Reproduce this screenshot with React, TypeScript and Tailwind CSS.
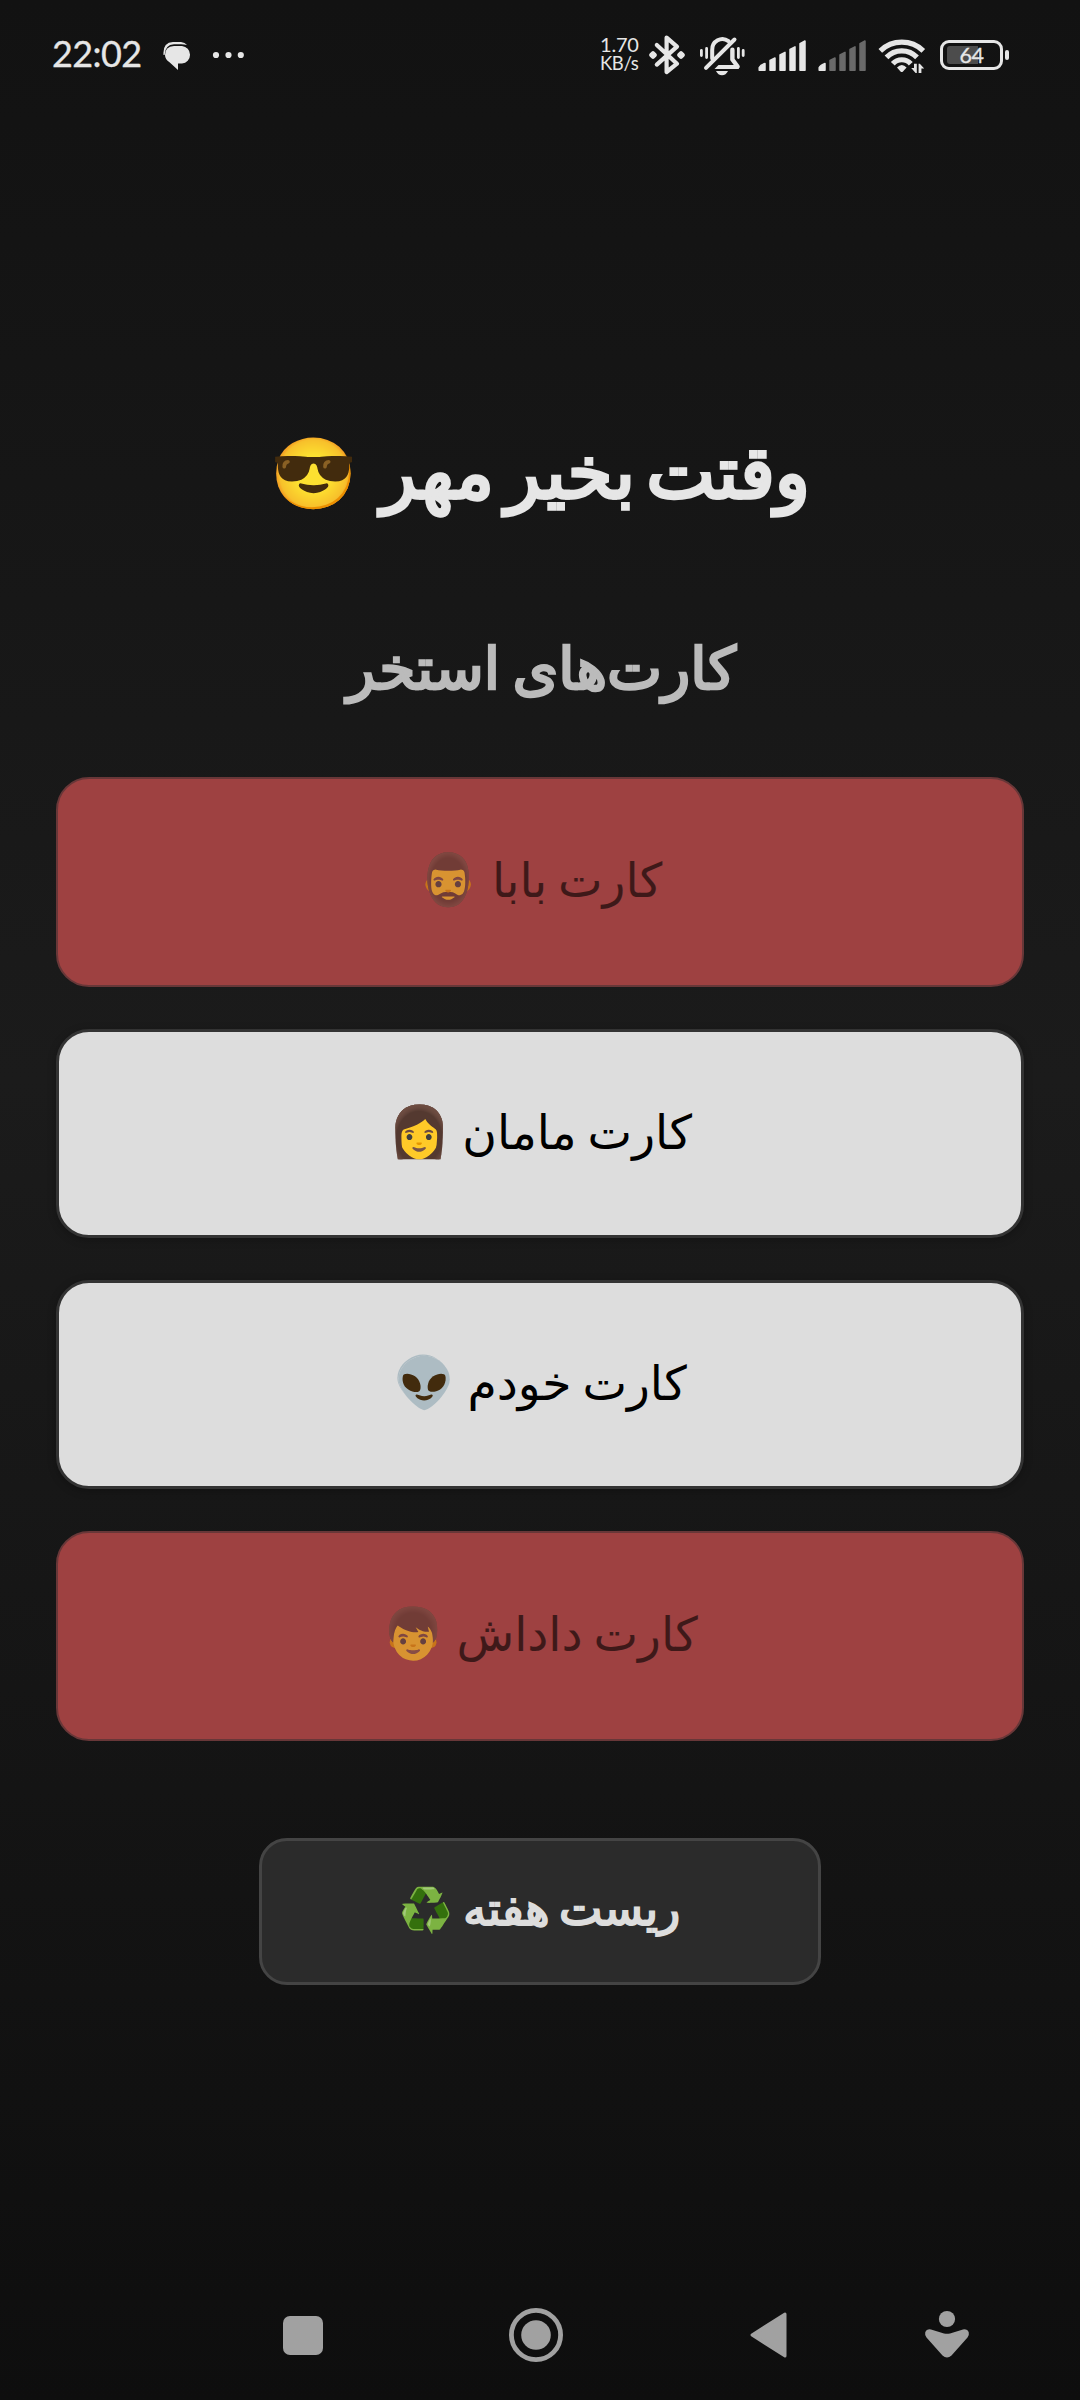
import React from "react";

type CardProps = { label: string; emoji: string; used?: boolean };

const cards: CardProps[] = [
  { label: "کارت بابا", emoji: "🧔‍♂️", used: true },
  { label: "کارت مامان", emoji: "👩" },
  { label: "کارت خودم", emoji: "👽" },
  { label: "کارت داداش", emoji: "👦", used: true },
];

function Card({ label, emoji, used }: CardProps) {
  return (
    <button
      className={
        used
          ? "flex h-[210px] w-full items-center justify-center rounded-[33px] border-[2px] border-[#683738] bg-[#9e4141] pb-[3px]"
          : "flex h-[209px] w-full items-center justify-center rounded-[33px] border-[3px] border-[#333333] bg-[#dddddd] pb-[2px] shadow-[0_2px_8px_rgba(0,0,0,0.25)]"
      }
    >
      <span
        className={
          used
            ? "flex items-baseline gap-[12px] leading-[60px] text-black opacity-60"
            : "flex items-baseline gap-[12px] leading-[60px] text-black"
        }
      >
        <span className="whitespace-nowrap text-[47.3px] [word-spacing:-4px]">{label}</span>
        <span className="font-['Noto_Color_Emoji'] text-[50px]">{emoji}</span>
      </span>
    </button>
  );
}

function Signal({ weak }: { weak?: boolean }) {
  const rest = weak ? "#6a6a6a" : "#e6e6e6";
  return (
    <svg className="h-[46px] w-[50px] shrink-0" viewBox="0 30 50 46" strokeLinejoin="round" strokeWidth="1.5">
      <path d="M1.2 67.5 Q2.5 65 7 63.4 V70.2 H1.2Z" fill="#e6e6e6" stroke="#e6e6e6" />
      <g fill={rest} stroke={rest}>
        <path d="M12 60.5 L17 58 V70.2 H12Z" />
        <path d="M22 55 L27 52.3 V70.2 H22Z" />
        <path d="M32 49.5 L37 46.8 V70.2 H32Z" />
        <path d="M42 43.7 L47 41 V70.2 H42Z" />
      </g>
    </svg>
  );
}

function StatusBar() {
  return (
    <header
      dir="ltr"
      className="flex h-[106px] w-full shrink-0 items-center pl-[52px] font-['Lato',sans-serif] text-[#e6e6e6]"
    >
      <span className="w-[111px] text-[36px] leading-[36px] tracking-[-0.6px] [-webkit-text-stroke:0.3px]">22:02</span>
      <svg className="h-[46px] w-[29px] shrink-0" viewBox="163 30 29 46" fill="#e6e6e6">
        <path d="M163.5 55 Q162.5 42.5 173 42 H181 Q185 42.3 187 45 Q184 44.3 181 44.3 H174 Q165 44.8 164.6 55Z" />
        <path d="M174 46 H182 A9 8.8 0 0 1 182 63.5 H178 V70 L169.5 62.2 Q165 59.5 165 55 Q165 46.5 174 46Z" />
      </svg>
      <svg className="ml-[20px] h-[46px] w-[34px] shrink-0" viewBox="212 30 34 46" fill="#e6e6e6">
        <circle cx="216" cy="55" r="3.1" />
        <circle cx="228.5" cy="55" r="3.1" />
        <circle cx="240.8" cy="55" r="3.1" />
      </svg>
      <div className="ml-[354px] mt-[2px] flex w-[48px] flex-col whitespace-nowrap leading-[19px]">
        <span className="text-[20px] tracking-[-0.2px]">1.70</span>
        <span className="text-[18.5px] tracking-[-0.4px]">KB/s</span>
      </div>
      <svg className="h-[46px] w-[38px] shrink-0" viewBox="648 30 38 46" fill="none" stroke="#e6e6e6" strokeWidth="4.2" strokeLinejoin="round" strokeLinecap="round">
        <path d="M656.8 45 L677 63.7 L666.6 72 V37.6 L677 46.6 L656.8 64.6" />
        <path d="M653 53.2 L654.8 55 L653 56.8 L651.2 55Z M681 53.2 L682.8 55 L681 56.8 L679.2 55Z" />
      </svg>
      <svg className="ml-[12px] h-[46px] w-[48px] shrink-0" viewBox="698 30 48 46" fill="none" stroke="#e6e6e6" strokeWidth="4" strokeLinecap="round">
        <path d="M734.5 39.5 L706 67.8" />
        <path d="M712.2 58.5 V50 A10.2 10.4 0 0 1 728.5 41.2" />
        <path d="M732.4 49.8 V59.5 L737.6 66.5" strokeWidth="4.4" strokeLinejoin="round" />
        <path d="M714.5 68.9 L718.5 65 H738.5 Q740 67 738.5 68.9Z" fill="#e6e6e6" stroke="none" />
        <path d="M716 71 H728 Q726 75.2 722 75.2 T716 71Z" fill="#e6e6e6" stroke="none" />
        <path d="M701.4 50.5 V55.5 M706.6 48.5 V57.5 M738.4 48.5 V57.5 M743.2 50.5 V55.5" strokeWidth="2.8" />
      </svg>
      <div className="ml-[12px] flex gap-[10px]">
        <Signal />
        <Signal weak />
      </div>
      <svg className="ml-[10px] h-[46px] w-[50px] shrink-0" viewBox="878 30 50 46" fill="none" stroke="#e6e6e6" strokeWidth="5.2">
        <path d="M880.3 50.8 A31 31 0 0 1 923.3 50.8" />
        <path d="M886.5 57.4 A21 21 0 0 1 917 57.4" />
        <path d="M892.8 63.8 A12 12 0 0 1 910.8 63.8" />
        <path d="M897 67.5 Q901.8 62.5 906.6 67.5 L903 71.5 Q901.8 72.5 900.5 71.5Z" fill="#e6e6e6" stroke="none" />
        <path d="M911.2 68 H914 V63.8 H916.8 V73 H915.6Z M918.6 63.8 H919.8 L924.2 68.6 H921.4 V73 H918.6Z" fill="#e6e6e6" stroke="none" />
      </svg>
      <div className="relative ml-[12px] mt-[4px] flex h-[30px] w-[63px] shrink-0 items-center justify-center rounded-[9px] border-[3px] border-[#e6e6e6]">
        <span className="absolute left-[4px] top-[3px] h-[18px] w-[31px] rounded-l-[3px] bg-[#4c4c4c]" />
        <span className="relative -mt-[1px] text-[21.5px] leading-[24px] tracking-[-0.4px] [-webkit-text-stroke:0.3px]">64</span>
      </div>
      <span className="ml-[2px] mt-[4px] h-[10px] w-[4px] shrink-0 rounded-[2px] bg-[#e6e6e6]" />
    </header>
  );
}

function NavBar() {
  return (
    <nav dir="ltr" className="mt-auto flex h-[130px] w-full shrink-0 items-center pl-[283px] text-[#a1a1a1]">
      <span className="h-[39px] w-[40px] rounded-[7px] bg-current" />
      <svg className="ml-[186px] h-[56px] w-[54px]" viewBox="0 0 54 56" fill="currentColor">
        <circle cx="27" cy="28" r="24.6" fill="none" stroke="currentColor" strokeWidth="4.8" />
        <circle cx="27" cy="28" r="14.8" />
      </svg>
      <svg className="ml-[186px] h-[56px] w-[40px]" viewBox="0 0 40 56" fill="currentColor" stroke="currentColor" strokeWidth="3" strokeLinejoin="round">
        <path d="M36 7 V49 L3 28Z" />
      </svg>
      <svg className="ml-[135px] h-[56px] w-[46px]" viewBox="0 0 46 56" fill="currentColor">
        <circle cx="23" cy="12" r="8.1" />
        <path d="M7 22.4 L20 26.4 Q23 27.2 26 26.4 L39 22.4 Q43.5 21.8 44.8 25.5 Q45.4 28 43.5 30.5 L27.5 48.5 Q23 52.6 18.5 48.5 L2.5 30.5 Q0.6 28 1.2 25.5 Q2.5 21.8 7 22.4Z" />
      </svg>
    </nav>
  );
}

export default function App() {
  return (
    <div
      dir="rtl"
      className="flex h-[2400px] w-[1080px] flex-col items-center overflow-hidden bg-[linear-gradient(180deg,#121212_0%,#1b1b1b_45%,#0e0e0e_100%)] font-['DejaVu_Sans',sans-serif]"
    >
      <StatusBar />

      <h1 className="mt-[317px] flex h-[100px] items-baseline gap-[24px] whitespace-nowrap text-[70px] leading-[100px] text-[#e6e6e6]">
        <span className="text-[73px] [-webkit-text-stroke:3.4px] [word-spacing:-12px]">وقتت بخیر مهر</span>
        <span className="font-['Noto_Color_Emoji']">😎</span>
      </h1>

      <h2 className="mt-[106px] h-[80px] whitespace-nowrap pl-[3px] text-[58.5px] leading-[80px] text-[#bbbbbb] [-webkit-text-stroke:2.7px] [word-spacing:-6px]">
        کارت‌های استخر
      </h2>

      <main className="mt-[68px] flex w-[968px] flex-col gap-[42px]">
        {cards.map((card) => (
          <Card key={card.label} {...card} />
        ))}
      </main>

      <button className="mt-[97px] flex h-[147px] w-[562px] shrink-0 items-center justify-center rounded-[28px] border-[3px] border-[#444444] bg-[#2b2b2b] pb-[4px] text-[#dddddd]">
        <span className="flex items-baseline gap-[10px] leading-[60px]">
          <span className="whitespace-nowrap text-[46px] [-webkit-text-stroke:2px] [word-spacing:-5px]">ریست هفته</span>
          <span className="font-['Noto_Color_Emoji'] text-[43px]">♻️</span>
        </span>
      </button>

      <NavBar />
    </div>
  );
}
